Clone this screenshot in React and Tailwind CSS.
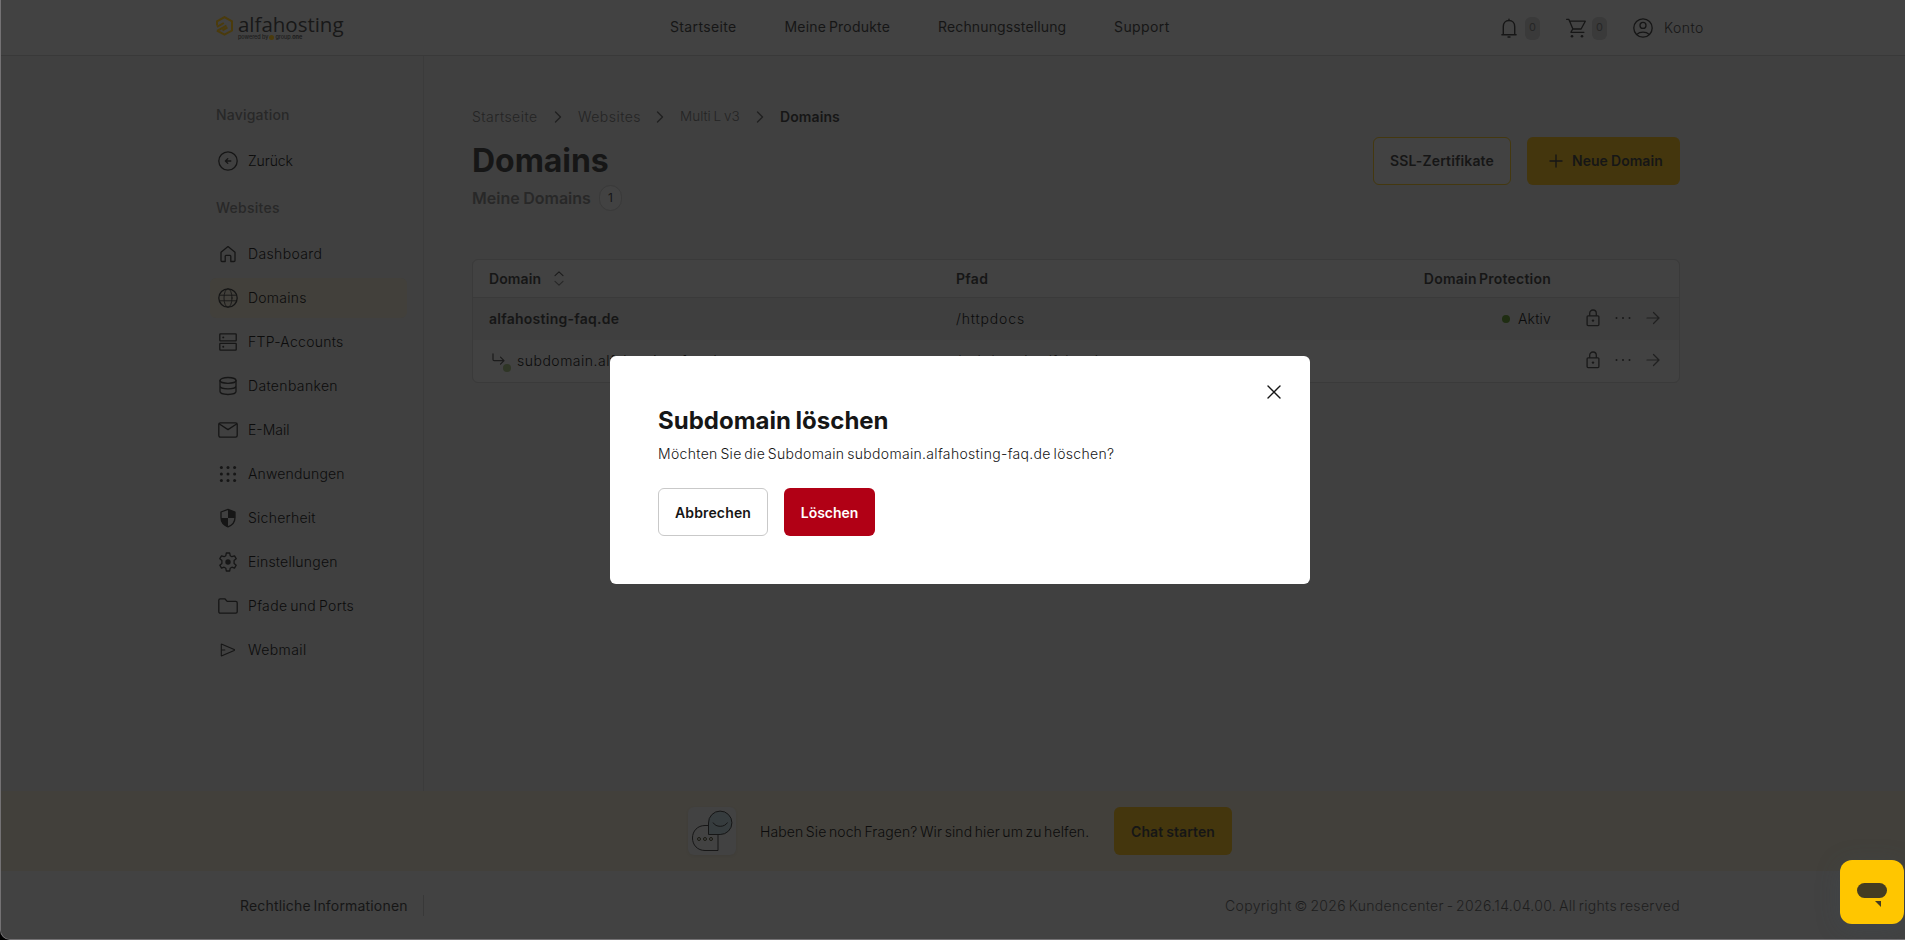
function Icon({ children, className = "size-6" }) {
  return (
    <svg
      viewBox="0 0 24 24"
      className={`shrink-0 ${className}`}
      fill="none"
      stroke="currentColor"
      strokeWidth="1.3"
      strokeLinecap="round"
      strokeLinejoin="round"
    >
      {children}
    </svg>
  );
}

const icons = {
  back: (
    <>
      <circle cx="12" cy="12" r="9.2" />
      <path d="M14.8 12H9.6M11.8 9.6 9.4 12l2.4 2.4" />
    </>
  ),
  home: (
    <path d="M5 10.2 12 4.6l7 5.6v8.3c0 .6-.4 1-1 1h-3.2v-5.2c0-.5-.4-.9-.9-.9h-3.8c-.5 0-.9.4-.9.9v5.2H6c-.6 0-1-.4-1-1z" />
  ),
  globe: (
    <>
      <circle cx="12" cy="12" r="9.2" />
      <ellipse cx="12" cy="12" rx="4" ry="9.2" strokeWidth="0.9" />
      <path d="M3.6 9.2h16.8M3.6 14.8h16.8" strokeWidth="0.9" />
    </>
  ),
  server: (
    <>
      <rect x="3.8" y="3.9" width="16.4" height="6.9" rx="0.6" />
      <rect x="3.8" y="13.3" width="16.4" height="6.9" rx="0.6" />
      <path d="M7.2 7.4h.1M7.2 16.8h.1" strokeWidth="1.9" />
    </>
  ),
  database: (
    <>
      <ellipse cx="12" cy="6.4" rx="8" ry="2.9" />
      <path d="M4 6.4v11.2c0 1.6 3.6 2.9 8 2.9s8-1.3 8-2.9V6.4M4 12c0 1.6 3.6 2.9 8 2.9s8-1.3 8-2.9" />
    </>
  ),
  mail: (
    <>
      <rect x="2.8" y="4.8" width="18.4" height="14.4" rx="1.6" />
      <path d="m3.4 6 8.6 5.6L20.6 6" />
    </>
  ),
  apps: (
    <g fill="currentColor" stroke="none">
      {[5.4, 12, 18.6].map((x) =>
        [5.6, 12, 18.4].map((y) => <circle key={`${x}-${y}`} cx={x} cy={y} r="1.5" />)
      )}
    </g>
  ),
  shield: (
    <>
      <path d="M12 3.4 5 6v5.6c0 4.2 2.8 7.7 7 9.2 4.2-1.5 7-5 7-9.2V6z" />
      <path
        d="M12 3.4 19 6v6h-7zM12 12v8.8C7.9 19.3 5 16.2 5 12z"
        fill="currentColor"
        stroke="none"
      />
    </>
  ),
  gear: (
    <>
      <path d="M10.3 3h3.400l.5 2.700 1.700 1 2.600-.9 1.700 2.900-2.100 1.800v2.900l2.100 1.800-1.700 2.900-2.600-.9-1.700 1-.5 2.800h-3.400l-.5-2.800-1.700-1-2.600.9-1.700-2.900 2.100-1.800v-2.900L3.800 8.700l1.700-2.900 2.600.9 1.700-1z" />
      <circle cx="12" cy="12" r="2.7" fill="currentColor" stroke="none" />
    </>
  ),
  folder: (
    <path d="M2.8 6.2c0-.8.6-1.400 1.400-1.400h4.600l2.400 2.600h8.600c.8 0 1.400.6 1.400 1.400v9c0 .8-.6 1.400-1.400 1.400H4.200c-.8 0-1.400-.6-1.400-1.400z" />
  ),
  send: (
    <path
      d="M5.3 6.6v10.800c0 .3.3.5.6.4l12.300-5.400c.4-.2.4-.6 0-.8L5.9 6.2c-.3-.1-.6.1-.6.4zM5.500 12h3.300"
      strokeWidth="1.1"
    />
  ),
};

const menu = [
  ["home", "Dashboard", "tracking-[0.37px]"],
  ["globe", "Domains", "tracking-[0.25px]"],
  ["server", "FTP-Accounts", "tracking-[0.28px]"],
  ["database", "Datenbanken", "tracking-[0.35px]"],
  ["mail", "E-Mail", "tracking-normal"],
  ["apps", "Anwendungen", "tracking-[0.17px]"],
  ["shield", "Sicherheit", "tracking-[0.25px]"],
  ["gear", "Einstellungen", "tracking-[0.2px]"],
  ["folder", "Pfade und Ports", "tracking-[0.35px] [word-spacing:-1.5px]"],
  ["send", "Webmail", "tracking-[0.4px]"],
];

function MenuItem({ icon, label, tracking, active }) {
  return (
    <a
      className={`flex h-10 w-[197px] items-center gap-2 rounded-md px-1.5 ${
        active ? "bg-[#42403b]" : ""
      }`}
    >
      <Icon>{icons[icon]}</Icon>
      <span className={`font-light text-[#0c0c0c] ${tracking}`}>{label}</span>
    </a>
  );
}

function Logo() {
  return (
    <div className="flex h-full w-[128px] gap-[5px] pt-4">
      <svg viewBox="0 0 17 20" className="h-5 w-[17px] shrink-0" fill="none" stroke="#4b3b0c" strokeWidth="2">
        <path d="M1 9.5V5.3L8.5 1.1 16 5.3v9.2l-7.500 4.200L1 14.600" />
        <path d="M1 10.8 7.8 7M1.200 14.900l9.300-5.300M6.500 14.300l5-2.800" />
      </svg>
      <div className="flex flex-col">
        <span className="-mt-[3px] h-[22px] font-['Open_Sans'] text-[20.5px] leading-[22px] tracking-[-0.02px] text-[#181818]">
          alfahosting
        </span>
        <span className="flex items-center text-[5.5px] leading-[5px] font-medium tracking-[-0.05px] whitespace-nowrap text-[#1c1c1c]">
          powered by
          <span className="mx-px size-[5px] rounded-full bg-[#4b3b0c]" />
          group.<b>one</b>
        </span>
      </div>
    </div>
  );
}

function Badge() {
  return (
    <span className="flex h-[23px] w-[15px] items-center justify-center rounded-[6px] bg-[#3a3a3a] text-[11px] text-[#262626]">
      0
    </span>
  );
}

function Header() {
  return (
    <header className="flex h-14 shrink-0 border-b border-[#393939] bg-[#424242] pl-[215px]">
      <Logo />
      <nav className="flex h-[54px] w-[1157px] items-center pl-[326px] whitespace-nowrap text-[#161616]">
        <a className="w-[114.5px] tracking-[0.35px]">Startseite</a>
        <a className="w-[153.5px] tracking-[0.22px] [word-spacing:-1.5px]">Meine Produkte</a>
        <a className="w-[176px] tracking-[0.14px]">Rechnungsstellung</a>
        <a className="tracking-[0.4px]">Support</a>
      </nav>
      <div className="flex h-[56px] items-center text-[#161616]">
        <Icon className="-ml-[4px] size-6">
          <path d="M6.3 18.6V10.5c0-3.400 2.300-6 5.700-6s5.700 2.600 5.700 6v8.100M4.900 18.700h14.200M12 3.200v1M11 21h2" strokeWidth="1.4" />
        </Icon>
        <span className="ml-1 flex"><Badge /></span>
        <Icon className="ml-[24px] size-6">
          <path d="M2.6 3.3h2.200L8.900 13h8.200l4.200-7.800H6M8.600 13.200l-1.700 3.100h13" strokeWidth="1.3" />
          <circle cx="8" cy="20.3" r="1.3" fill="currentColor" stroke="none" />
          <circle cx="18" cy="20.3" r="1.3" fill="currentColor" stroke="none" />
        </Icon>
        <span className="ml-[4px] flex"><Badge /></span>
        <Icon className="ml-[24px] size-6">
          <circle cx="12" cy="12" r="9.2" />
          <circle cx="12" cy="9.4" r="3" />
          <path d="M5.8 18.4c1.600-1.500 3.700-2.300 6.200-2.300s4.600.8 6.200 2.300" />
        </Icon>
        <span className="ml-[9px] font-light tracking-[0.5px]">Konto</span>
      </div>
    </header>
  );
}

function Sidebar() {
  return (
    <aside className="w-[423px] shrink-0 border-r border-[#3b3b3b] pt-[47px] pl-[209px] text-[#161616]">
      <h2 className="h-6 px-1.5 leading-6 font-medium tracking-[0.2px] text-[#282828]">Navigation</h2>
      <div className="pt-[14px]">
        <MenuItem icon="back" label="Zurück" tracking="tracking-[-0.1px]" />
      </div>
      <h2 className="mt-[15px] mb-[14px] h-6 px-1.5 leading-6 font-medium tracking-[0.25px] text-[#282828]">Websites</h2>
      <nav className="flex flex-col gap-1">
        {menu.map(([icon, label, tracking]) => (
          <MenuItem key={label} icon={icon} label={label} tracking={tracking} active={label === "Domains"} />
        ))}
      </nav>
    </aside>
  );
}

function Chevron() {
  return (
    <svg viewBox="0 0 8 12" className="h-3 w-2 shrink-0" fill="none" stroke="#202020" strokeWidth="1.4" strokeLinecap="round" strokeLinejoin="round">
      <path d="m1.5 1 5 5-5 5" />
    </svg>
  );
}

function RowActions() {
  return (
    <div className="flex items-center pb-px text-[#191919]">
      <svg viewBox="0 0 14 18" className="ml-[35px] h-[18px] w-[14px]" fill="none" stroke="currentColor" strokeWidth="1.3">
        <rect x="1.1" y="6.8" width="11.8" height="9.8" rx="1" />
        <path d="M3.7 6.8V4.3C3.7 2.4 5.1 1 7 1s3.300 1.400 3.300 3.300v2.500" />
        <circle cx="7" cy="11.6" r="1.2" fill="currentColor" stroke="none" />
      </svg>
      <svg viewBox="0 0 16 4" className="ml-[15px] h-1 w-4" fill="currentColor">
        <circle cx="1.5" cy="2" r="1" />
        <circle cx="8" cy="2" r="1" />
        <circle cx="14.5" cy="2" r="1" />
      </svg>
      <svg viewBox="0 0 14 14" className="ml-[15px] size-[14px]" fill="none" stroke="#202020" strokeWidth="1.2" strokeLinecap="round" strokeLinejoin="round">
        <path d="M1 7h11.500M7.500 1.500 13 7l-5.500 5.500" />
      </svg>
    </div>
  );
}

const grid = "grid grid-cols-[483px_1fr_170px_128px] items-center";

function DomainTable() {
  return (
    <section className="mt-12 h-[124px] w-[1208px] overflow-hidden rounded-md border border-[#3a3a3a] bg-[#424242] text-[#161616]">
      <div className={`${grid} h-[38px] border-b border-[#3a3a3a] font-semibold`}>
        <div className="flex items-center gap-[13px] pl-4">
          <span className="tracking-[0.1px]">Domain</span>
          <svg viewBox="0 0 10 15" className="h-[15px] w-[10px]" fill="none" stroke="#1c1c1c" strokeWidth="1.1" strokeLinecap="round" strokeLinejoin="round">
            <path d="M1 4.7 5 .8l4 3.900" />
            <path d="m1 10.3 4 3.900 4-3.900" stroke="#272727" />
          </svg>
        </div>
        <span className="tracking-[0.3px]">Pfad</span>
        <span className="text-right tracking-[0.23px] whitespace-nowrap [word-spacing:-1.5px]">Domain Protection</span>
      </div>
      <div className={`${grid} h-[42px] bg-[#3f3f3f] pb-px`}>
        <span className="pl-4 font-semibold tracking-[0.26px]">alfahosting-faq.de</span>
        <span className="font-light tracking-[0.85px] text-[#0c0c0c]">/httpdocs</span>
        <span className="flex items-center justify-end gap-2 pt-px font-light tracking-[0.2px] text-[#0c0c0c]">
          <span className="size-2 rounded-full bg-[#1f2d12]" />
          Aktiv
        </span>
        <RowActions />
      </div>
      <div className={`${grid} h-[42px] pb-px`}>
        <div className="flex items-center pl-[19px]">
          <span className="relative flex h-5 w-[25px]">
            <svg viewBox="0 0 13 13" className="mt-[2px] size-[13px]" fill="none" stroke="#1c1c1c" strokeWidth="1.2" strokeLinecap="round" strokeLinejoin="round">
              <path d="M1 .8v5.700c0 .8.500 1.200 1.200 1.200H12M8.500 4.200 12 7.700l-3.500 3.500" />
            </svg>
            <span className="absolute top-[13px] left-[11px] size-2 rounded-full bg-[#2f3626]" />
          </span>
          <span className="font-light tracking-[0.5px] text-[#0c0c0c]">subdomain.alfahosting-faq.de</span>
        </div>
        <span className="font-light tracking-[0.35px]">/subdomain.alfahosting</span>
        <span />
        <RowActions />
      </div>
    </section>
  );
}

function Main() {
  return (
    <main className="pt-[49px] pl-12">
      <div className="flex h-6 items-center font-light text-[#242424]">
        <span className="w-[65px] tracking-[0.46px]">Startseite</span>
        <span className="mr-4 ml-[17px] flex"><Chevron /></span>
        <span className="w-[63px] tracking-[0.46px]">Websites</span>
        <span className="ml-[15px] flex"><Chevron /></span>
        <span className="ml-4 w-[60px] text-[13.5px] tracking-[0.02px] whitespace-nowrap [word-spacing:-1px]">Multi L v3</span>
        <span className="mx-4 flex"><Chevron /></span>
        <span className="font-semibold tracking-[0.1px] text-[#161616]">Domains</span>
      </div>
      <div className="flex h-[82px] w-[1208px] items-start justify-between text-[#161616]">
        <div className="pt-3">
          <h1 className="h-10 text-[32px] leading-10 font-bold tracking-[-0.05px]">Domains</h1>
          <div className="mt-1 flex h-[26px] items-center gap-2">
            <span className="text-base font-semibold text-[#282828] [word-spacing:-0.5px]">Meine Domains</span>
            <span className="flex h-[26px] w-[23px] items-center justify-center rounded-full border border-[#393939] bg-[#424242] text-xs">1</span>
          </div>
        </div>
        <div className="flex gap-4 pt-2 font-semibold">
          <button className="h-12 w-[138px] rounded-md border border-[#44380f] bg-[#424242] tracking-[0.12px]">SSL-Zertifikate</button>
          <button className="flex h-12 w-[153px] items-center rounded-md bg-[#44360d] pl-[22px] tracking-[0.04px] whitespace-nowrap [word-spacing:-0.5px]">
            <svg viewBox="0 0 14 14" className="mr-[9px] size-[14px]" fill="none" stroke="#161616" strokeWidth="1.4" strokeLinecap="round">
              <path d="M7 1v12M1 7h12" />
            </svg>
            Neue Domain
          </button>
        </div>
      </div>
      <DomainTable />
    </main>
  );
}

function HelpBand() {
  return (
    <div className="flex h-20 shrink-0 items-center justify-center bg-[#42403b] pl-[14px] text-[#161616]">
      <div className="size-12 rounded-md bg-[#424242] shadow-[0_1px_3px_rgba(0,0,0,0.06)]">
        <svg viewBox="0 0 48 48" className="size-12" fill="none" stroke="#161616" strokeWidth="1">
          <path d="M20.5 18.5H17C9.5 18.5 4.5 24 4.5 31S9.500 43.500 17 43.500H30V27.500" />
          <path d="M20.5 27.5V16A11.700 11.700 0 1 1 32.200 27.500z" fill="#363c3e" />
          <path d="M25 15.5c1.500 2.600 4.200 3.800 7.200 3.800s5.700-1.200 7.300-3.800" />
          <g stroke="#1a1a12">
            <circle cx="11" cy="32" r="1.5" />
            <circle cx="17" cy="32" r="1.5" />
            <circle cx="23" cy="32" r="1.5" />
          </g>
        </svg>
      </div>
      <span className="ml-6 w-[330px] pt-px font-light tracking-[0.1px] whitespace-nowrap text-[#0c0c0c] [word-spacing:-1.5px]">
        Haben Sie noch Fragen? Wir sind hier um zu helfen.
      </span>
      <button className="ml-6 h-12 w-[118px] rounded-md bg-[#44360d] pt-px font-semibold tracking-[0.08px] [word-spacing:-0.7px]">
        Chat starten
      </button>
    </div>
  );
}

function Footer() {
  return (
    <footer className="flex flex-1 items-start justify-between bg-[#424242] pt-6 pr-[225px]">
      <div className="flex h-[21px] w-[423px] items-center border-r border-[#383838] pl-[239px] tracking-[0.18px] text-[#161616] [word-spacing:-1.5px]">
        Rechtliche Informationen
      </div>
      <span className="leading-[22px] font-light tracking-[0.33px] text-[#1e1e1e] [word-spacing:-1.5px]">
        Copyright © 2026 Kundencenter - 2026.14.04.00. All rights reserved
      </span>
    </footer>
  );
}

function DeleteDialog() {
  return (
    <div className="fixed inset-0 flex items-center justify-center pl-[15px]">
      <div role="dialog" className="h-[228px] w-[700px] rounded-md bg-white px-12 pt-[30px] text-[#161616]">
        <div className="-mr-[19px] flex h-3 justify-end">
          <svg viewBox="0 0 14 14" className="-mt-px size-[14px]" fill="none" stroke="#161616" strokeWidth="1.4" strokeLinecap="round">
            <path d="m1 1 12 12M13 1 1 13" />
          </svg>
        </div>
        <h2 className="mt-[7px] h-8 text-2xl leading-8 font-bold [word-spacing:-1px]">Subdomain löschen</h2>
        <p className="mt-[5px] h-6 leading-6 font-[350] tracking-[0.32px] [word-spacing:-1.5px]">
          Möchten Sie die Subdomain subdomain.alfahosting-faq.de löschen?
        </p>
        <div className="mt-[22px] flex gap-4 font-semibold">
          <button className="h-12 w-[110px] rounded-md border border-[#c9c9c9] pt-px tracking-[0.15px]">Abbrechen</button>
          <button className="h-12 w-[91px] rounded-md bg-[#b10015] pt-px tracking-[-0.05px] text-white">Löschen</button>
        </div>
      </div>
    </div>
  );
}

function ChatLauncher() {
  return (
    <button className="fixed right-px bottom-4 flex size-16 items-center justify-center rounded-xl bg-[#ffc600] shadow-[0_4px_24px_rgba(60,80,90,0.25)]">
      <svg viewBox="0 0 64 64" className="size-16" fill="#443c22">
        <rect x="17" y="23" width="30" height="15" rx="7.5" />
        <path d="M35 41h6v6z" />
      </svg>
    </button>
  );
}

export default function App() {
  return (
    <div className="h-screen bg-black font-['Inter',sans-serif] text-sm">
      <div className="flex h-full flex-col overflow-hidden rounded-bl-[10px] border-b border-l border-[#747274] bg-[#404040]">
        <Header />
        <div className="flex h-[735px] shrink-0">
          <Sidebar />
          <Main />
        </div>
        <HelpBand />
        <Footer />
      </div>
      <DeleteDialog />
      <ChatLauncher />
    </div>
  );
}
